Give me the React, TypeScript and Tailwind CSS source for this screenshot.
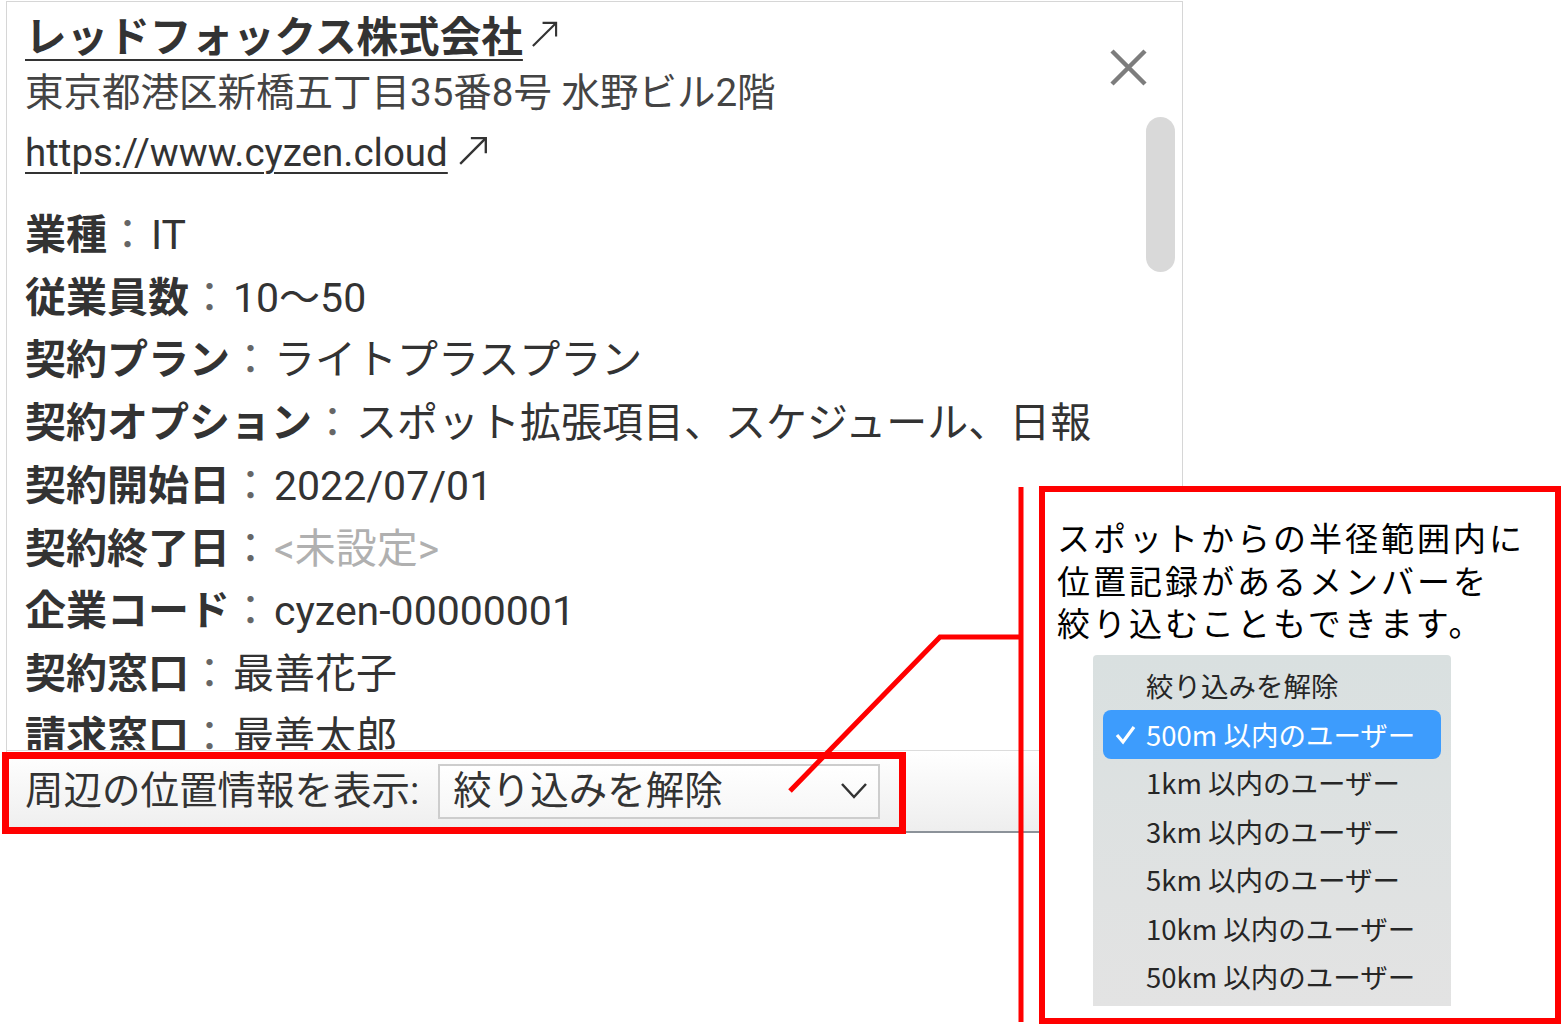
import React from 'react';

const rows: { label: string; value: string; muted?: boolean }[] = [
  { label: '業種', value: 'IT' },
  { label: '従業員数', value: '10〜50' },
  { label: '契約プラン', value: 'ライトプラスプラン' },
  { label: '契約オプション', value: 'スポット拡張項目、スケジュール、日報' },
  { label: '契約開始日', value: '2022/07/01' },
  { label: '契約終了日', value: '<未設定>', muted: true },
  { label: '企業コード', value: 'cyzen-00000001' },
  { label: '契約窓口', value: '最善花子' },
  { label: '請求窓口', value: '最善太郎' },
];

const menuItems = [
  '絞り込みを解除',
  '500m 以内のユーザー',
  '1km 以内のユーザー',
  '3km 以内のユーザー',
  '5km 以内のユーザー',
  '10km 以内のユーザー',
  '50km 以内のユーザー',
];

function ExtArrow({ size, className }: { size: number; className?: string }) {
  return (
    <svg width={size} height={size} viewBox="0 0 30 30" className={className} fill="none" stroke="#333" strokeWidth="2.2">
      <path d="M3 27 L27 3" />
      <path d="M13 3 H27 V17" />
    </svg>
  );
}

export default function App() {
  return (
    <div className="relative w-[1562px] h-[1026px] overflow-hidden bg-white font-['Roboto','Noto_Sans_CJK_JP',sans-serif] text-[#333]">
      {/* Panel */}
      <div className="ml-[6px] mt-[1px] w-[1177px] border-x border-t border-[#d6d6d6]">
        <div className="relative h-[748px] overflow-hidden pl-[18px] pt-[12px]">
          <div className="flex items-center leading-[48px]">
            <span className="text-[41.6px] font-bold underline decoration-2 underline-offset-[7px]">レッドフォックス株式会社</span>
            <ExtArrow size={29} className="ml-[7px] -mt-[8px]" />
          </div>
          <div className="text-[38.5px] leading-[62px] text-[#444]">東京都港区新橋五丁目35番8号 水野ビル2階</div>
          <div className="flex items-center leading-[58px]">
            <span className="text-[38.5px] text-[#333] underline decoration-2 underline-offset-[6px]">https://www.cyzen.cloud</span>
            <ExtArrow size={32} className="ml-[9px] -mt-[4px]" />
          </div>
          <div className="mt-[22px]">
            {rows.map((r) => (
              <div key={r.label} className="flex text-[41px] leading-[62.7px] whitespace-nowrap">
                <span className="font-bold">{r.label}</span>
                <span className="text-[#666]">：</span>
                <span className={r.muted ? 'ml-[3px] text-[#b0b0b0]' : 'ml-[3px] text-[#333]'}>{r.value}</span>
              </div>
            ))}
          </div>
          <svg className="absolute left-[1103px] top-[47px]" width="37" height="37" viewBox="0 0 37 37" stroke="#7d7d7d" strokeWidth="4.5">
            <path d="M2 2 L35 35 M35 2 L2 35" />
          </svg>
          <div className="absolute left-[1139px] top-[115px] w-[29px] h-[155px] rounded-full bg-[#d9d9d9]" />
        </div>
        <div className="flex h-[83px] items-center border-t border-b-2 border-t-[#dcdcdc] border-b-[#8c9299] bg-linear-to-b from-white to-[#eeeeee] pl-[18px]">
          <span className="text-[38.5px] text-[#333]">周辺の位置情報を表示:</span>
          <div className="ml-[19px] flex h-[55px] w-[442px] items-center justify-between border-2 border-[#cdcdcd] bg-linear-to-b from-white to-[#f6f6f6] pl-[13px] pr-[11px]">
            <span className="text-[38.5px] leading-none text-[#333]">絞り込みを解除</span>
            <svg width="26" height="16" viewBox="0 0 26 16" fill="none" stroke="#333" strokeWidth="2.5">
              <path d="M1 1 L13 14 L25 1" />
            </svg>
          </div>
        </div>
      </div>

      <div className="absolute left-[2px] top-[752px] w-[904px] h-[82px] border-[7px] border-[#ff0000]" />

      <svg className="pointer-events-none absolute left-0 top-0" width="1562" height="1026" fill="none" stroke="#ff0000" strokeWidth="5">
        <path d="M1021 487 V1022" />
        <path d="M1021 637 H940 L790 791" />
      </svg>

      <div className="absolute left-[1039px] top-[486px] w-[522px] h-[538px] border-[6px] border-[#ff0000] bg-white pl-[12px] pt-[24px]">
        <div className="font-['Noto_Sans_CJK_JP',sans-serif] text-[33px] leading-[42.5px] tracking-[3px] text-black">
          <div>スポットからの半径範囲内に</div>
          <div>位置記録があるメンバーを</div>
          <div>絞り込むこともできます。</div>
        </div>
        <div className="ml-[36px] mt-[11px] w-[358px] rounded-t-[4px] bg-linear-to-b from-[#d9e0e0] to-[#e3e3e3] pt-[7px] pb-[5px] font-['Noto_Sans_CJK_JP',sans-serif]">
          {menuItems.map((m, i) => (
            <div
              key={m}
              className={
                i === 1
                  ? 'relative mx-[10px] flex h-[48.5px] items-center rounded-[8px] bg-[#3d9cfd] pl-[43px] text-[27.5px] text-white'
                  : 'mx-[10px] flex h-[48.5px] items-center pl-[43px] text-[27.5px] text-[#262626]'
              }
            >
              {i === 1 && (
                <svg className="absolute left-[12px] top-[15px]" width="21" height="20" viewBox="0 0 21 20" fill="none" stroke="white" strokeWidth="3.2">
                  <path d="M2 10 L8 17 L19 2" />
                </svg>
              )}
              {m}
            </div>
          ))}
        </div>
      </div>
    </div>
  );
}
